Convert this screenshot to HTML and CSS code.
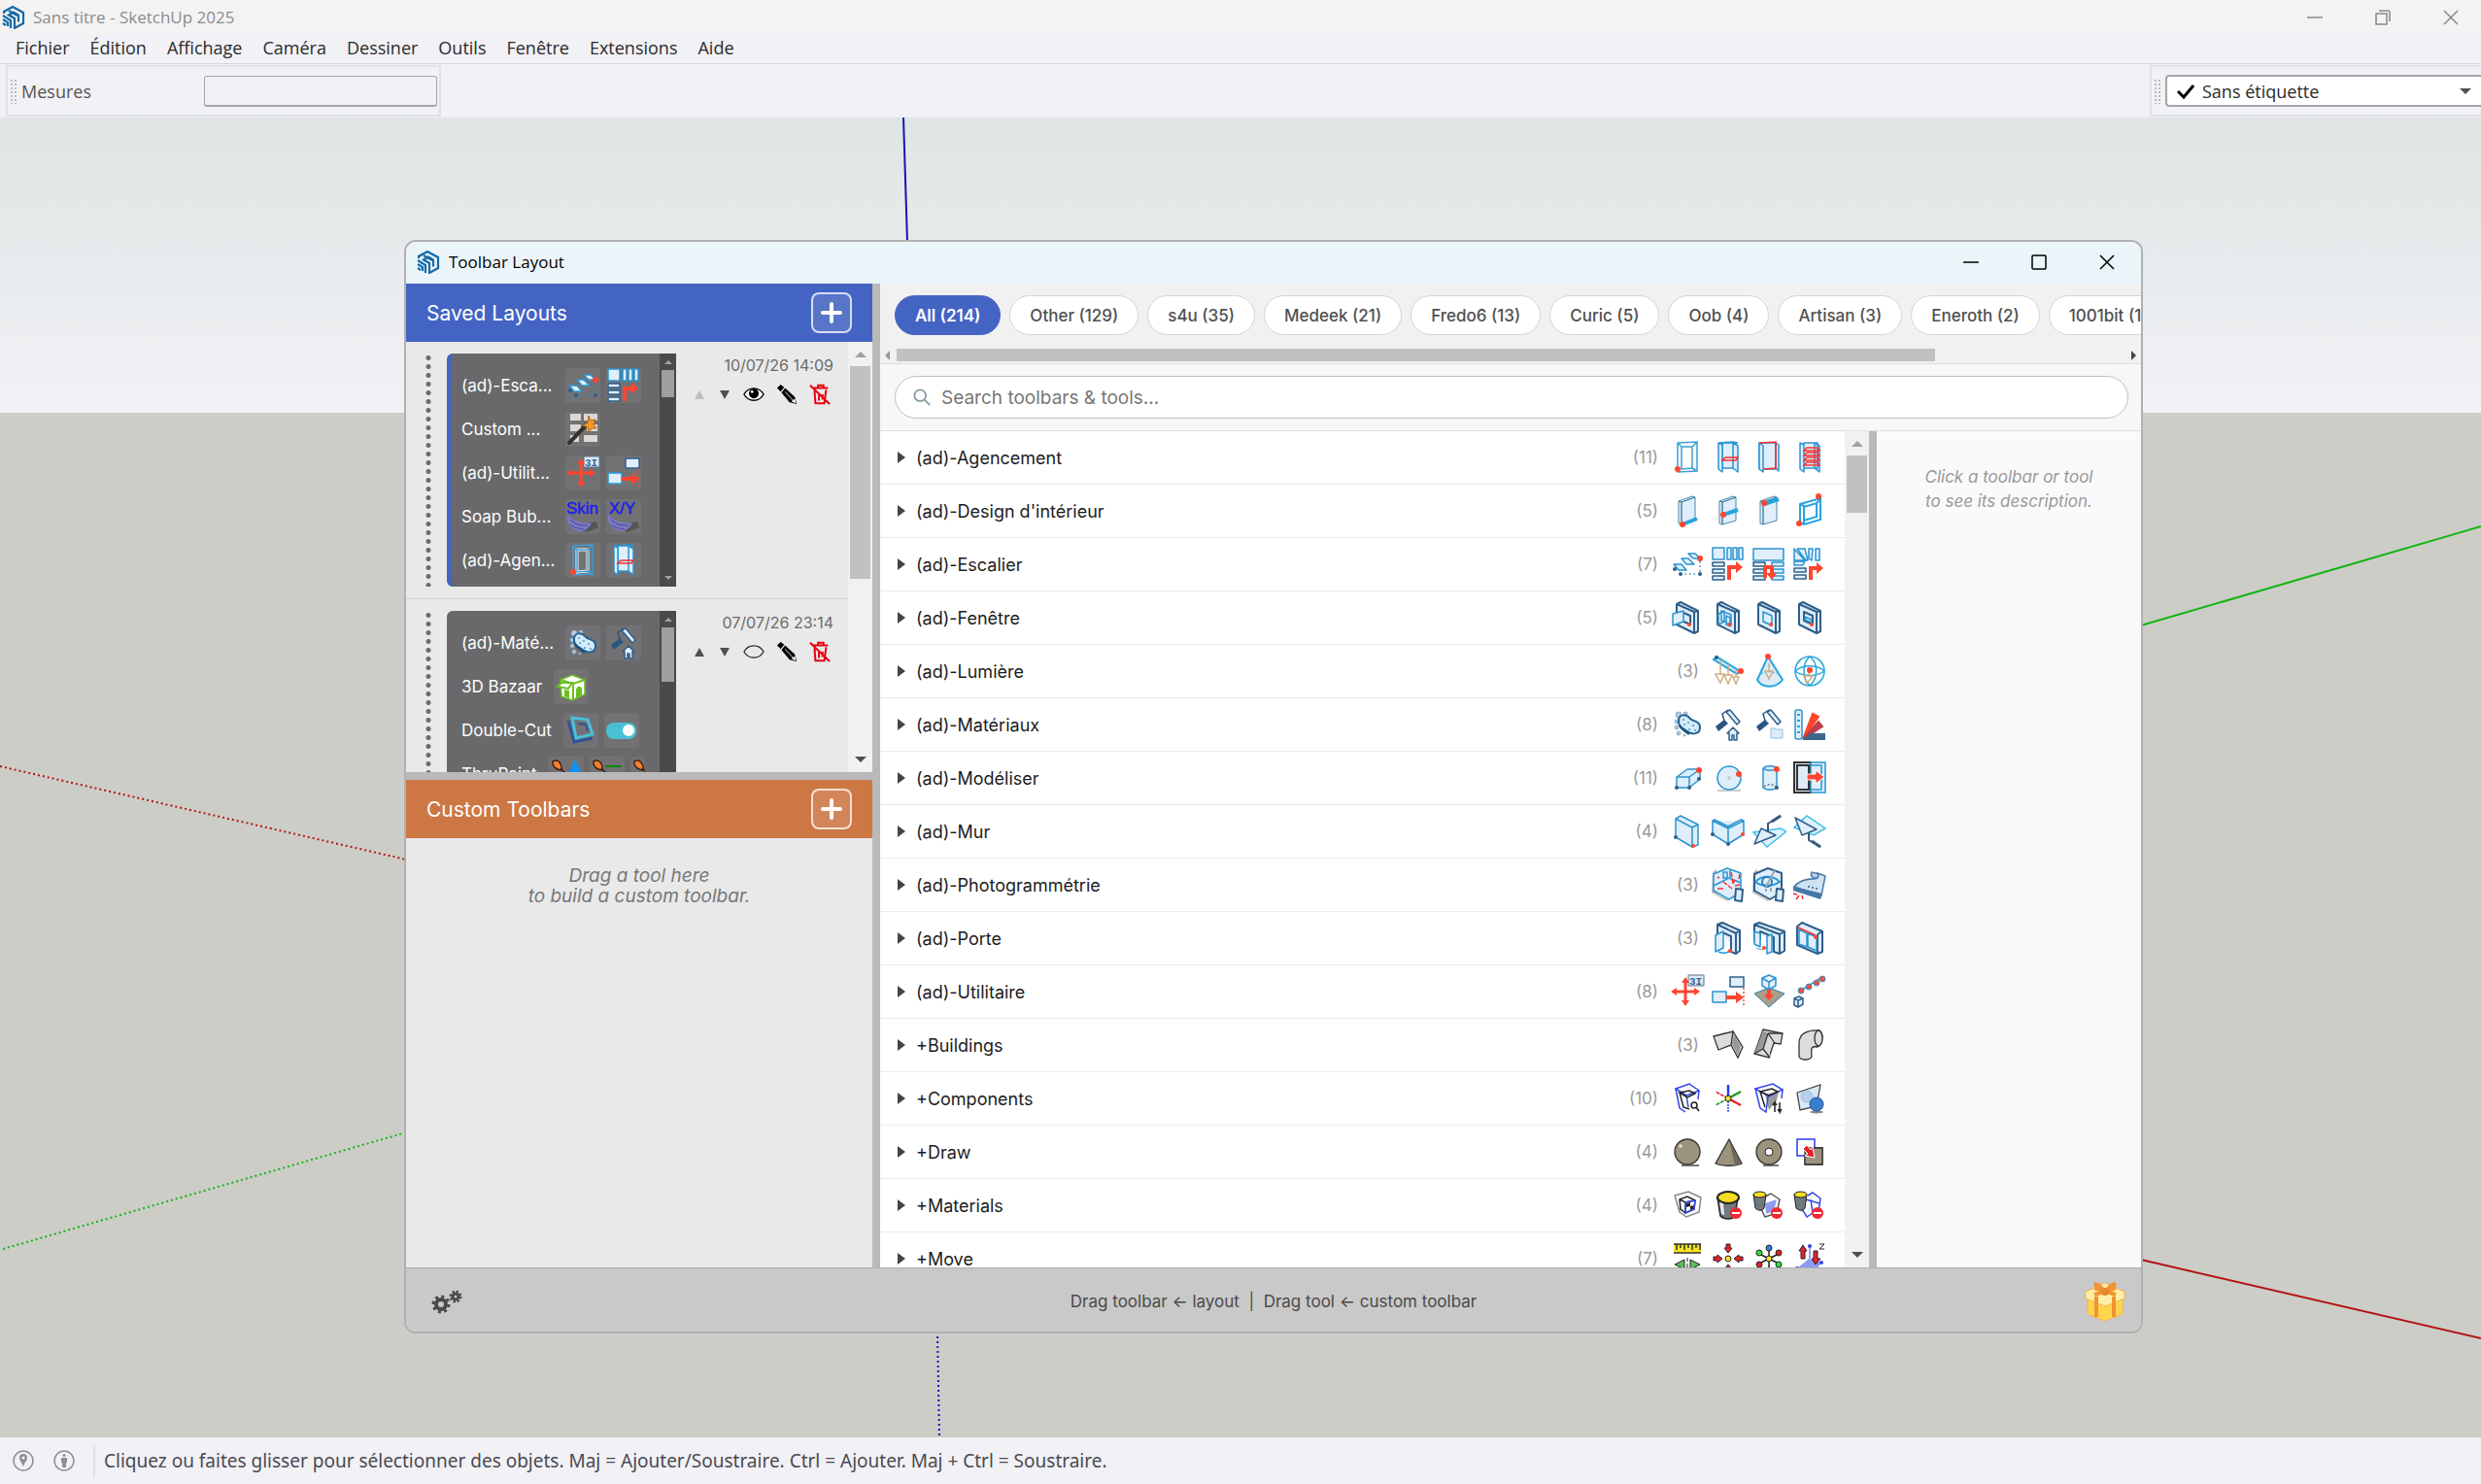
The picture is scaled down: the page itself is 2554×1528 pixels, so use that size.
FILE: index.html
```html
<!DOCTYPE html>
<html lang="fr">
<head>
<meta charset="utf-8">
<title>Sans titre - SketchUp 2025</title>
<link rel="stylesheet" href="styles.css">
</head>
<body>
<svg class="defs" aria-hidden="true">
  <symbol id="logo" viewBox="0 0 24 24"><g fill="none" stroke="#1469a8" stroke-width="2.2"><path d="M2 8V6l9-5 11 6v11l-9 5V13L7 9.500l5-3 5 3v7"/><path d="M1 10l8 5v8M1 14l5 3v4M1 18l3 2M7 5l9 5"/></g></symbol>
  <symbol id="plus" viewBox="0 0 24 24"><path d="M12 3v18M3 12h18" stroke="#fff" stroke-width="4" stroke-linecap="round"/></symbol>
  <symbol id="frame" viewBox="0 0 36 36"><path class="bo" d="M8 3l20-1v30l-20 1zM12 7h11v22l-11 1zM8 3l4 4M28 2l-5 5M28 32l-5-3"/><circle class="r" cx="8" cy="30" r="3"/></symbol>
  <symbol id="shelf" viewBox="0 0 36 36"><path class="b" d="M12 3h14v26H12z"/><path class="b" d="M8 3l4 2v28l-4-3zM23 3l5 3v27l-5-4zM8 3l15-1 5 1"/><path class="rs" d="M12 21l3-3 13 0-2 3z"/></symbol>
  <symbol id="stair" viewBox="0 0 36 36"><path class="b" d="M4 18h8l5 6H9zM12 12h7l6 6h-8zM19 7h7l5 5h-7z"/><path d="M11 28h20V14" fill="none" stroke="#2f88bd" stroke-width="1.500" stroke-dasharray="1.500 3"/><circle class="nf" cx="5" cy="23" r="2"/><circle class="nf" cx="11" cy="28" r="2"/><circle class="nf" cx="31" cy="28" r="2"/><circle class="r" cx="31" cy="12" r="3"/></symbol>
  <symbol id="stairturn" viewBox="0 0 36 36"><path class="b" d="M2 1h12v12H2zM17 1h4v12h-4zM23 1h4v12h-4zM29 1h4v12h-4z"/><path class="n" d="M2 16h12v4H2zM2 23h12v4H2zM2 30h12v4H2z"/><path class="r" d="M17 34V19h9v-4l7 6-7 6v-4h-5v11z"/></symbol>
  <symbol id="moves" viewBox="0 0 36 36"><path d="M19 1h16v11H19z" fill="#dcebf7" stroke="#58718c"/><text x="20" y="11" class="tag">3I</text><path class="r" d="M16 3l4 6h-2.500v7.500H25V14l6 4-6 4v-2.500h-7.500V27H20l-4 6-4-6h2.500v-7.500H7V22l-6-4 6-4v2.500h7.500V9H12z"/></symbol>
  <symbol id="dist" viewBox="0 0 36 36"><path class="n" stroke-width="2" d="M20 3h14v10H20z"/><path class="b" stroke-width="2" d="M2 18h14v11H2z"/><path class="r" d="M16 22h10v-4l8 6-8 6v-4H16z"/><path d="M34 14v18" stroke="#f43" stroke-width="1.500" stroke-dasharray="2 2"/></symbol>
  <symbol id="sponge" viewBox="0 0 36 36"><g fill="#b5cce0" stroke="#8fa9c2"><circle cx="9" cy="8" r="3"/><circle cx="16" cy="7" r="2"/><circle cx="7" cy="15" r="2"/><circle cx="7" cy="21" r="2"/><circle cx="9" cy="27" r="2"/><circle cx="15" cy="29" r="1"/></g><path d="M9 13c1-6 8-6 12-1 3 3 10 2 10 9 0 7-8 8-13 4-5-3-10-6-9-12z" fill="#d6eaf8" stroke="#1f6396" stroke-width="2"/><path d="M10 19c2 5 6 6 10 9" fill="none" stroke="#1f4c74" stroke-width="2"/><g fill="#3aa0dc"><circle cx="14" cy="13" r="1"/><circle cx="19" cy="16" r="1"/><circle cx="15" cy="18" r="1"/><circle cx="24" cy="19" r="1"/><circle cx="26" cy="24" r="1"/><circle cx="20" cy="23" r="1"/></g></symbol>
  <symbol id="roller" viewBox="0 0 36 36"><path d="M5 20l9-7 4 4-10 8z" fill="#2b5680"/><path d="M14 14l-2-7 6-4M18 3l10 13" fill="none" stroke="#2b5680" stroke-width="1.500"/><path class="n" d="M16 5l4-2 10 12-3 3z"/></symbol>
  <symbol id="house" viewBox="0 0 36 36"><path class="n" d="M17 27l6-6 6 6h-2v7h-3v-5h-2v5h-3v-7z"/></symbol>
  <symbol id="eye" viewBox="0 0 24 24"><path d="M1 12c5-9 17-9 22 0-5 9-17 9-22 0z" fill="#fff" stroke="#000" stroke-width="1.500"/><circle cx="12" cy="11" r="5.500"/><circle cx="10" cy="9" r="1.500" fill="#fff"/></symbol>
  <symbol id="eyeoff" viewBox="0 0 24 24"><path d="M1 12c5-9 17-9 22 0-5 9-17 9-22 0z" fill="none" stroke="#222" stroke-width="1.300"/></symbol>
  <symbol id="pencil" viewBox="0 0 24 24"><path d="M1 5l4-4 4 3-4 5zM6 10l4-5 11 10 2 8-8-2z"/><path d="M10 9l9 10" stroke="#e9e9e9" stroke-width="1"/><path d="M17 20l4-3 1 5z" fill="#fff"/></symbol>
  <symbol id="trash" viewBox="0 0 24 24"><g fill="none" stroke="#e60012" stroke-width="2.200"><path d="M4 5h17M10 4V2h6v3M6 8l1 14h10l2-15M11 12v7M15 12v6M1 2l22 21"/></g></symbol>
  <symbol id="bucket" viewBox="0 0 36 36"><path d="M2 5l2 14c3 3 7 3 9 0l2-14z" fill="#707880" stroke="#222"/><ellipse cx="8.500" cy="5" rx="6.500" ry="3" fill="#f3dc22" stroke="#222"/></symbol>
  <symbol id="no" viewBox="0 0 36 36"><circle cx="26" cy="26" r="6" fill="#f22832"/><path d="M22 26h8" stroke="#fff" stroke-width="2"/></symbol>
  <symbol id="up" viewBox="0 0 12 8"><path d="M0 7l6-6 6 6z"/></symbol>
  <symbol id="down" viewBox="0 0 12 8"><path d="M0 1h12l-6 6z"/></symbol>
  <symbol id="tallup" viewBox="0 0 10 9"><path d="M0 9l5-9 5 9z"/></symbol>
  <symbol id="talldown" viewBox="0 0 10 9"><path d="M0 0h10L5 9z"/></symbol>
  <symbol id="thru" viewBox="0 0 36 36"><path d="M4 5c5-3 10 2 9 9-5 0-10-4-9-9zM12 12l6 6" fill="#f08030" stroke="#40210f" stroke-width="1.500"/></symbol>
</svg>

<header class="titlebar">
  <svg class="logo"><use href="#logo"/></svg>
  <span>Sans titre - SketchUp 2025</span>
  <div class="winbtns main-btns">
    <button aria-label="Réduire"><svg viewBox="0 0 16 16"><path d="M0 8h16"/></svg></button>
    <button aria-label="Restaurer"><svg viewBox="0 0 16 16"><path d="M1 4h11v11H1zM4 1h9q2 0 2 2v9"/></svg></button>
    <button aria-label="Fermer"><svg viewBox="0 0 16 16"><path d="M1 1l14 14M15 1L1 15"/></svg></button>
  </div>
</header>
<nav class="menu">
  <a href="#">Fichier</a><a href="#">Édition</a><a href="#">Affichage</a><a href="#">Caméra</a><a href="#">Dessiner</a><a href="#">Outils</a><a href="#">Fenêtre</a><a href="#">Extensions</a><a href="#">Aide</a>
</nav>
<div class="toolbars">
  <div class="tb measures"><i class="grip"></i><label for="mes">Mesures</label><input id="mes" type="text"></div>
  <div class="tb tags"><i class="grip"></i>
    <div class="combo"><svg viewBox="0 0 18 16"><path d="M1 8l6 6L17 2" fill="none" stroke="#000" stroke-width="3"/></svg><select aria-label="Étiquette"><option>Sans étiquette</option></select><svg class="tri"><use href="#down"/></svg></div>
  </div>
</div>

<main class="scene">
  <svg class="axes" viewBox="0 0 2554 1359" preserveAspectRatio="none" fill="none" stroke-width="2">
    <path d="M930 0l4 128" stroke="#1414b4"/>
    <path d="M965 1250l2 109" stroke="#1414b4" stroke-dasharray="2 3"/>
    <path d="M2204 523l350-102" stroke="#14b414"/>
    <path d="M3 1165l415-120" stroke="#14b414" stroke-dasharray="2 3"/>
    <path d="M0 668l418 96" stroke="#b41414" stroke-dasharray="2 3"/>
    <path d="M2204 1176l350 81" stroke="#b41414"/>
  </svg>

  <section class="dialog" aria-label="Toolbar Layout">
    <header class="dlg-title">
      <svg class="logo"><use href="#logo"/></svg>
      <span>Toolbar Layout</span>
      <div class="winbtns">
        <button aria-label="Minimize"><svg viewBox="0 0 16 16"><path d="M0 8h16"/></svg></button>
        <button aria-label="Maximize"><svg viewBox="0 0 16 16"><rect x="1" y="1" width="14" height="14" rx="1"/></svg></button>
        <button aria-label="Close"><svg viewBox="0 0 16 16"><path d="M1 1l14 14M15 1L1 15"/></svg></button>
      </div>
    </header>
    <div class="dlg-body">
      <aside class="left">
        <div class="head blue"><h2>Saved Layouts</h2><button class="add" aria-label="Add layout"><svg><use href="#plus"/></svg></button></div>
        <div class="saved">
          <div class="layouts">
            <article class="layout">
              <i class="dots"></i>
              <div class="card active">
                <div class="card-rows">
                  <div class="crow"><span class="cut">(ad)-Esca...</span><svg class="tool"><use href="#stair"/></svg><svg class="tool"><use href="#stairturn"/></svg></div>
                  <div class="crow"><span class="cut">Custom ...</span><svg class="tool" viewBox="0 0 36 36"><path d="M5 2h11v7H5zM19 2h14v7H19zM5 13h11v7H5zM22 13h11v7H22zM5 24h9v7H5zM19 24h14v7H19z" fill="#ddd8d5"/><path d="M4 32L22 13" stroke="#35332c" stroke-width="4" stroke-linecap="round"/><path d="M24 4l2 5 5-1-2 5 3 4-5 0-3 4-1-5-5-2 5-3z" fill="#f09a2a" stroke="#a86414"/></svg></div>
                  <div class="crow"><span class="cut">(ad)-Utilit...</span><svg class="tool"><use href="#moves"/></svg><svg class="tool"><use href="#dist"/></svg></div>
                  <div class="crow"><span class="cut">Soap Bub...</span><svg class="tool" viewBox="0 0 36 36"><path d="M10 28l22-5 2 6-12 5z" fill="#555"/><path d="M2 15c5 8 14 9 25 10-3 5-8 9-13 8-6-1-14-8-12-18z" fill="#7a78c4"/><path d="M5 21c6 6 12 6 18 6M5 26c5 4 9 4 14 5" stroke="#4a488e" fill="none"/><text x="1" y="15" class="soap">Skin</text></svg><svg class="tool" viewBox="0 0 36 36"><path d="M10 28l22-5 2 6-12 5z" fill="#555"/><path d="M2 15c5 8 14 9 25 10-3 5-8 9-13 8-6-1-14-8-12-18z" fill="#7a78c4"/><path d="M5 21c6 6 12 6 18 6M5 26c5 4 9 4 14 5" stroke="#4a488e" fill="none"/><text x="3" y="15" class="soap">X/Y</text></svg></div>
                  <div class="crow"><span class="cut">(ad)-Agen...</span><svg class="tool" viewBox="0 0 36 36"><path d="M12 7h11v22l-11 1z" fill="none" stroke="#fff" stroke-width="3"/><use href="#frame"/></svg><svg class="tool"><use href="#shelf"/></svg></div>
                </div>
                <div class="bar dark"><svg class="tri"><use href="#up"/></svg><i class="thumb t1"></i><svg class="tri"><use href="#down"/></svg></div>
              </div>
              <div class="meta"><time>10/07/26 14:09</time>
                <div class="acts"><button class="arr" disabled aria-label="Up"><svg><use href="#tallup"/></svg></button><button class="arr" aria-label="Down"><svg><use href="#talldown"/></svg></button><button aria-label="Hide"><svg><use href="#eye"/></svg></button><button aria-label="Rename"><svg><use href="#pencil"/></svg></button><button aria-label="Delete"><svg><use href="#trash"/></svg></button></div>
              </div>
            </article>
            <article class="layout">
              <i class="dots"></i>
              <div class="card">
                <div class="card-rows">
                  <div class="crow"><span class="cut">(ad)-Maté...</span><svg class="tool"><use href="#sponge"/></svg><svg class="tool" viewBox="0 0 36 36"><use href="#roller"/><use href="#house"/></svg></div>
                  <div class="crow"><span>3D Bazaar</span><svg class="tool" viewBox="0 0 36 36"><path d="M7 11L19 6l13 5v15l-13 6-11-4z" fill="#fff" stroke="#6abf1f" stroke-width="1.500"/><path d="M7 11l13 4 12-4M20 15v16" stroke="#6abf1f" stroke-width="2" fill="none"/><path d="M11 21l5 1v8l-5-2zM23 30V21c1-4 5-4 6-1v7z" fill="#6abf1f"/><path d="M4 18l4-4h11l-4 6z" fill="#fff" stroke="#6abf1f" stroke-width="2"/></svg></div>
                  <div class="crow"><span>Double-Cut</span><svg class="tool" viewBox="0 0 36 36"><path d="M5 8l6 22 19-4" fill="none" stroke="#31529a" stroke-width="3"/><path d="M9 5l16 2 5 15-17 4z" fill="none" stroke="#48c0d8" stroke-width="3"/><path d="M15 11l8 1 2 7" fill="none" stroke="#31529a" stroke-width="2"/></svg><svg class="tool" viewBox="0 0 36 36"><rect x="2" y="10" width="31" height="17" rx="8" fill="#4bc0d4"/><circle cx="25" cy="18" r="6" fill="#fff"/></svg></div>
                  <div class="crow"><span>ThruPaint</span><svg class="tool" viewBox="0 0 36 36"><use href="#thru"/><path d="M27 3l9 20H18z" fill="#0a94ff"/></svg><svg class="tool" viewBox="0 0 36 36"><use href="#thru"/><path d="M16 10h17" stroke="#0f8a0f" stroke-width="2"/></svg><svg class="tool" viewBox="0 0 36 36"><use href="#thru"/></svg></div>
                </div>
                <div class="bar dark"><svg class="tri"><use href="#up"/></svg><i class="thumb t2"></i><svg class="tri"><use href="#down"/></svg></div>
              </div>
              <div class="meta"><time>07/07/26 23:14</time>
                <div class="acts"><button class="arr" aria-label="Up"><svg><use href="#tallup"/></svg></button><button class="arr" aria-label="Down"><svg><use href="#talldown"/></svg></button><button aria-label="Show"><svg><use href="#eyeoff"/></svg></button><button aria-label="Rename"><svg><use href="#pencil"/></svg></button><button aria-label="Delete"><svg><use href="#trash"/></svg></button></div>
              </div>
            </article>
          </div>
          <div class="bar"><svg class="tri off"><use href="#up"/></svg><i class="thumb t3"></i><svg class="tri"><use href="#down"/></svg></div>
        </div>
        <div class="hsplit"></div>
        <div class="head orange"><h2>Custom Toolbars</h2><button class="add" aria-label="Add toolbar"><svg><use href="#plus"/></svg></button></div>
        <p class="drop">Drag a tool here<br>to build a custom toolbar.</p>
      </aside>
      <div class="vsplit"></div>
      <div class="right">
        <div class="pills"><button class="on">All (214)</button><button>Other (129)</button><button>s4u (35)</button><button>Medeek (21)</button><button>Fredo6 (13)</button><button>Curic (5)</button><button>Oob (4)</button><button>Artisan (3)</button><button>Eneroth (2)</button><button>1001bit (1)</button></div>
        <div class="hbar"><svg viewBox="0 0 5 10"><path d="M5 0v10L0 5z" fill="#999"/></svg><i></i><svg viewBox="0 0 5 10"><path d="M0 0v10l5-5z" fill="#444"/></svg></div>
        <div class="searchwrap"><label class="search"><svg viewBox="0 0 20 20"><circle cx="8" cy="8" r="6.500"/><path d="M13 13l6 6"/></svg><input type="search" placeholder="Search toolbars &amp; tools..." aria-label="Search"></label></div>
        <div class="columns">
          <ul class="list">
            <li><button>(ad)-Agencement</button><em>(11)</em>
              <svg><use href="#frame"/></svg><svg><use href="#shelf"/></svg>
              <svg viewBox="0 0 36 36"><path class="b" d="M8 3h17v27H8z"/><path class="b" d="M8 3l4 3v27l-4-3zM25 3l3 2v27l-3-3z"/><path class="rs" d="M9 3l16-1v27l-12 1"/></svg>
              <svg viewBox="0 0 36 36"><path class="b" d="M8 3l4 2v28l-4-3zM12 3h14v26H12zM23 3l5 3v27l-5-4z"/><path class="rs" d="M12 11l3-3h11l2 3zM12 16l3-3h11l2 3zM12 21l3-3h11l2 3zM12 26l3-3h11l2 3z"/></svg></li>
            <li><button>(ad)-Design d'intérieur</button><em>(5)</em>
              <svg viewBox="0 0 36 36"><path class="s" d="M12 9l14-5v24l-14 4zM9 8l14-5 3 1-14 5zM9 8l3 1v23l-3-1z"/><path d="M13 32l15-6" class="thick"/><circle class="r" cx="13" cy="32" r="3"/></svg>
              <svg viewBox="0 0 36 36"><path class="s" d="M12 9l14-5v24l-14 4zM9 8l14-5 3 1-14 5zM9 8l3 1v23l-3-1z"/><path d="M13 22l15-5" class="thick"/><circle class="r" cx="13" cy="22" r="3"/></svg>
              <svg viewBox="0 0 36 36"><path class="s" d="M12 9l14-5v24l-14 4zM9 8l14-5 3 1-14 5zM9 8l3 1v23l-3-1z"/><path d="M13 11l15-5" class="thick"/><circle class="r" cx="13" cy="10" r="3"/></svg>
              <svg viewBox="0 0 36 36"><path d="M8 11l21-6v22l-17 5-4-2zM12 14l13-4v14l-13 4zM8 11l4 2v18M29 6l-4 4" fill="none" stroke="#25a5de" stroke-width="2"/><circle class="r" cx="27" cy="3" r="3"/><circle class="r" cx="7" cy="31" r="3"/></svg></li>
            <li><button>(ad)-Escalier</button><em>(7)</em>
              <svg><use href="#stair"/></svg><svg><use href="#stairturn"/></svg>
              <svg viewBox="0 0 36 36"><path class="b" d="M2 2h31v12H2zM21 16h12v4H21zM21 23h12v4H21zM21 30h12v4H21z"/><path class="n" d="M2 16h12v4H2zM2 23h12v4H2zM2 30h12v4H2z"/><path class="r" d="M12 32V19h11v8h3l-5 7-6-7h4v-4h-3v9z"/></svg>
              <svg viewBox="0 0 36 36"><path class="b" d="M2 2l11 12H2zM5 2h8l3 12h-2zM17 2h4l-1 12-3-2zM24 2h4v12h-4zM2 15h11l-2 4H2z"/><path class="n" d="M2 22h12v4H2zM2 29h12v4H2z"/><path class="r" d="M17 34V20h8v-4l7 6-7 6v-4h-4v10z"/></svg></li>
            <li><button>(ad)-Fenêtre</button><em>(5)</em>
              <svg viewBox="0 0 36 36"><path class="n w" d="M7 4l18 8v22L7 25zM7 4l4-2 18 9v21l-4 2M25 12l4-1M12 12l9 4v9l-9-4z"/><path class="b" d="M3 14l11-3v11L3 26z"/><circle class="r" cx="20" cy="25" r="2"/></svg>
              <svg viewBox="0 0 36 36"><path class="n w" d="M7 4l18 8v22L7 25zM7 4l4-2 18 9v21l-4 2M25 12l4-1"/><path class="b" d="M11 11l10 4v10l-10-4zM8 14l6-3v11l-6 3zM16 16l4 2v9l-4-2z"/><circle class="r" cx="20" cy="25" r="2"/></svg>
              <svg viewBox="0 0 36 36"><path class="n w" d="M7 4l18 8v22L7 25zM7 4l4-2 18 9v21l-4 2M25 12l4-1"/><path class="b" d="M12 12l9 4v10l-9-4z"/><circle class="r" cx="20" cy="25" r="2"/></svg>
              <svg viewBox="0 0 36 36"><path class="n w" d="M7 4l18 8v22L7 25zM7 4l4-2 18 9v21l-4 2M25 12l4-1M12 12l9 4v9l-9-4z"/><path class="b" d="M13 17l7 3v3l-7-3z"/><circle class="r" cx="20" cy="25" r="2"/></svg></li>
            <li><button>(ad)-Lumière</button><em>(3)</em>
              <svg viewBox="0 0 36 36"><path d="M3 6l3-3 24 15-3 3z" fill="#cce8f8" stroke="#25a5de" stroke-width="2"/><path class="tan" d="M10 7v14M18 11v12M26 17v7M5 21h9l-4 9zM14 22h8l-4 9zM23 24h6l-3 7z"/><circle class="nf" cx="6" cy="4" r="2"/><circle class="r" cx="31" cy="18" r="3"/></svg>
              <svg viewBox="0 0 36 36"><path d="M17 3l15 24c-7 9-21 9-26 0z" fill="#dcebf7" stroke="#25a5de" stroke-width="2"/><path d="M10 21c4-3 11-3 16 0" fill="none" stroke="#25a5de" stroke-dasharray="2 2"/><path class="tan" d="M18 10v8M14 18h8l-4 8z"/><circle class="r" cx="17" cy="3" r="3"/></svg>
              <svg viewBox="0 0 36 36"><g fill="none" stroke="#25a5de" stroke-width="1.500"><circle cx="18" cy="18" r="15"/><path d="M18 3c-8 7-8 22 0 30M18 3c9 7 9 22 0 30M3 18c8-7 22-7 30 0M3 18c8 6 22 6 30 0"/></g><path class="tan" d="M18 18l-2 5M12 23h9l-6 8z"/><circle class="r" cx="18" cy="17" r="3"/></svg></li>
            <li><button>(ad)-Matériaux</button><em>(8)</em>
              <svg><use href="#sponge"/></svg><svg viewBox="0 0 36 36"><use href="#roller"/><use href="#house"/></svg>
              <svg viewBox="0 0 36 36"><use href="#roller"/><path d="M20 22h4l1 1h7v9H20z" fill="#dcebf7" stroke="#8fc4ec"/></svg>
              <svg viewBox="0 0 36 36"><path d="M11 33l10-26 6 3z" fill="#ff452b" stroke="#ff452b" stroke-width="2"/><path d="M11 33l16-18 4 5z" fill="#bc3f48" stroke="#bc3f48" stroke-width="2"/><path d="M11 33l8-6h15v7H11z" fill="#3c668c"/><rect class="b" x="3" y="3" width="7" height="30" rx="2"/><path d="M5 8h3M5 14h3M5 20h3M5 26h3" stroke="#25a5de" stroke-width="2"/></svg></li>
            <li><button>(ad)-Modéliser</button><em>(11)</em>
              <svg viewBox="0 0 36 36"><path class="b" d="M7 17l11-8h13l-11 8zM7 17h13v11H7zM20 17l11-8v10l-11 9z"/><circle class="nf" cx="7" cy="28" r="2"/><circle class="nf" cx="20" cy="28" r="2"/><circle class="nf" cx="30" cy="19" r="2"/><circle class="r" cx="30" cy="10" r="3"/></svg>
              <svg viewBox="0 0 36 36"><path d="M7 31h24" stroke="#bbb" stroke-width="1.500"/><circle class="b" cx="19" cy="18" r="12"/><circle cx="19" cy="18" r="2" fill="#c7ccd2"/><circle class="r" cx="29" cy="14" r="3"/></svg>
              <svg viewBox="0 0 36 36"><path class="b" d="M12 8v20c3 3 11 3 14 0V8c-3-3-11-3-14 0zM12 8c3 3 11 3 14 0"/><path d="M13 27c4-3 9-3 12 0" fill="none" stroke="#234" stroke-dasharray="2 2"/><circle class="nf" cx="26" cy="28" r="2"/><circle class="r" cx="26" cy="9" r="3"/></svg>
              <svg viewBox="0 0 36 36"><path d="M2 2h17v31H2zM5 5h12v25H5z" fill="#dcebf7" stroke="#333" stroke-width="2"/><path class="b" d="M19 2h15v31H19zM19 5h11v25H19z"/><path class="r" stroke="#fff" d="M15 14h9v-4l9 7-9 7v-4h-9z"/></svg></li>
            <li><button>(ad)-Mur</button><em>(4)</em>
              <svg viewBox="0 0 36 36"><path class="b" d="M6 5l17 9v20L6 24zM6 5l5-3 18 9-6 3M23 14l6-3v21l-6 2"/><circle class="nf" cx="6" cy="24" r="2"/><circle class="r" cx="24" cy="33" r="2"/></svg>
              <svg viewBox="0 0 36 36"><path class="b" d="M2 7l16 8v16L2 21zM18 15l16-8v14l-16 10zM2 7l2-1 14 7 13-7 3 1"/><circle class="nf" cx="2" cy="21" r="2"/><circle class="nf" cx="18" cy="31" r="2"/><circle class="r" cx="33" cy="21" r="2"/></svg>
              <svg viewBox="0 0 36 36"><path d="M2 19l28-4 6 3-20 16z" fill="#dff3fb" stroke="#3cbfe8" stroke-width="1.500"/><path class="n" d="M10 15l15 7-22 9z"/><path d="M17 19v-9l13-8" fill="none" stroke="#355a7d" stroke-width="2"/><path d="M21 8l9-6" stroke="#355a7d" stroke-width="3"/></svg>
              <svg viewBox="0 0 36 36"><path d="M2 14l13-12 19 13-12 7z" fill="#dff3fb" stroke="#3cbfe8" stroke-width="1.500"/><path class="n" d="M3 4l22 12-15 6z"/><path d="M17 20v7l12 7" fill="none" stroke="#355a7d" stroke-width="2"/><path d="M20 28l9 6" stroke="#355a7d" stroke-width="3"/></svg></li>
            <li><button>(ad)-Photogrammétrie</button><em>(3)</em>
              <svg viewBox="0 0 36 36"><path d="M2 5l4-3v25l12 7-1 1L1 26z" fill="#bbb"/><path class="b" d="M3 7l14-6 14 5v20l-12 7L3 24zM3 19l16-8 12 5M20 2v9"/><path class="b" d="M13 5h4v6h-4z"/><path class="rs" d="M7 10l2 1M13 15l4 3M7 22h6M21 5l1 5M30 7l-1 5M25 13l-2 4M30 18l-5 1M18 19l4 3M22 12l1 4"/><path class="n w" d="M26 22l7 1-1 12-7-1z"/></svg>
              <svg viewBox="0 0 36 36"><path d="M2 5l4-3v25l12 7-1 1L1 26z" fill="#bbb"/><path class="n w" d="M3 7l14-6 14 5v20l-12 7L3 24z"/><path class="b w" d="M4 15c6-7 19-7 25 0-7 5-19 5-25 0z"/><circle cx="16" cy="15" r="5" fill="none" stroke="#287fb8" stroke-width="2"/><path d="M15 20l9-17M15 22v3M20 21v4" stroke="#9ba9b5" stroke-width="2"/><path class="n w" d="M26 22l7 1-1 12-7-1z"/></svg>
              <svg viewBox="0 0 36 36"><path d="M2 20c5-6 12-8 20-8h3l3-5-8-2c-2 4 1 6 4 6" fill="#b9d3ea" stroke="#4a7ba8" stroke-width="1.500"/><path d="M2 20c5-6 12-8 20-8 5 0 6-3 4-6l8 3-4 20z" fill="#cfe2f3" stroke="#4a7ba8" stroke-width="1.500"/><path d="M1 20l30 7-2 6L1 24z" fill="#4677a8"/><g fill="#2f5f8a"><circle cx="17" cy="20" r="1"/><circle cx="21" cy="21" r="1"/><circle cx="25" cy="22" r="1"/></g><path class="rs" d="M1 27l4 1M4 33l3-4M10 29l1 4"/></svg></li>
            <li><button>(ad)-Porte</button><em>(3)</em>
              <svg viewBox="0 0 36 36"><path class="n w" d="M7 4l5-2 18 8v21l-4 3-5-2V16l-9-4-5 5zM7 4l19 9v20M26 13l4-3"/><path class="b" d="M5 15l8-4v17l-8 4z"/><path d="M8 32c4 2 9 1 13-1" fill="none" stroke="#25a5de" stroke-width="1.500"/><circle class="r" cx="20" cy="31" r="2"/></svg>
              <svg viewBox="0 0 36 36"><path class="n w" d="M3 4l5-2 26 9v20l-5 3-6-2V17L9 11v8l-6 2zM3 4l26 10v20M29 14l5-3"/><path class="b" d="M3 11l6 2v14l-6-3zM16 16l5-2v18l-5 2z"/><path d="M5 28c3 2 6 2 9 0" fill="none" stroke="#25a5de"/><circle class="r" cx="13" cy="28" r="2"/></svg>
              <svg viewBox="0 0 36 36"><path class="n w" d="M5 6l5-4 21 9v21l-5 2-21-9zM26 14l5-3M26 14v20"/><path class="b" d="M7 9l8 4v14l-8-3zM16 13l9 4v14l-9-4z"/><path class="rs w" d="M6 7l18 8"/><circle class="r" cx="24" cy="17" r="2"/></svg></li>
            <li><button>(ad)-Utilitaire</button><em>(8)</em>
              <svg><use href="#moves"/></svg><svg><use href="#dist"/></svg>
              <svg viewBox="0 0 36 36"><path d="M3 20l15-6 16 6-16 14z" fill="#a89f8b" stroke="#357eac"/><path class="b" d="M11 4l7-3 7 3v8l-7 4-7-4zM11 4l7 4 7-4M18 8v8"/><path class="r" d="M16 16h4v5h3l-5 6-5-6h3z"/></svg>
              <svg viewBox="0 0 36 36"><path d="M7 18L31 3" stroke="#44a6d4" stroke-width="2"/><g fill="#f0503c" stroke="#3a8ebf"><circle cx="9" cy="17" r="3"/><circle cx="17" cy="13" r="3"/><circle cx="25" cy="9" r="3"/><circle cx="31" cy="5" r="3"/></g><path class="n" d="M2 25l5-2 4 2v6l-5 3-4-2zM2 25l4 2 5-2M6 27v6"/></svg></li>
            <li><button>+Buildings</button><em>(3)</em>
              <svg viewBox="0 0 36 36"><path class="g" d="M3 9l20-5-2 14-13 5zM23 4l10 16-5 11-7-13z"/><path d="M24 7l7 12-3 10-6-12z" fill="#999"/></svg>
              <svg viewBox="0 0 36 36"><path class="g" d="M12 2l20 4-2 11-7-1-5 15-15-4z"/><path d="M12 3l5 3-6 16-8 5z" fill="#999"/><path class="g" d="M17 6l15 0M17 6l-5 16 7 9M12 22l-9 5M17 6l7 10"/></svg>
              <svg viewBox="0 0 36 36"><path class="g" d="M7 30V16C7 6 16 2 28 3c5 4 3 15-2 17-6-1-7 0-6 10-2 4-11 4-13 0z"/><ellipse class="g" cx="27" cy="11" rx="4" ry="8"/></svg></li>
            <li><button>+Components</button><em>(10)</em>
              <svg viewBox="0 0 36 36"><g fill="none" stroke-width="1.500"><path d="M6 8l14-5 10 7-13 5zM6 8l4 20 6 4M17 15l2 12M30 10l-1 9" stroke="#3545e8"/><path d="M10 12l10-2 6 3-8 4zM10 12l4 15 6 2" stroke="#222"/><circle cx="25" cy="25" r="3" stroke="#222"/><path d="M27 27l3 4" stroke="#222"/></g></svg>
              <svg viewBox="0 0 36 36"><g stroke-width="2.500" fill="none"><path d="M18 18V4" stroke="#2a3cf0"/><path d="M18 18l13-7" stroke="#1d961d"/><path d="M18 18l13 7" stroke="#e8202c"/><path d="M18 18v15" stroke="#2a3cf0" stroke-width="1.500" stroke-dasharray="2 1"/><path d="M18 18L5 11" stroke="#e8202c" stroke-width="1.500" stroke-dasharray="4 1"/><path d="M18 18L5 25" stroke="#1d961d" stroke-width="1.500" stroke-dasharray="4 1"/></g><circle cx="18" cy="18" r="3" fill="#ffe12a" stroke="#222"/></svg>
              <svg viewBox="0 0 36 36"><path d="M14 14l14-3-2 9-8 10z" fill="#999"/><g fill="none" stroke-width="1.500"><path d="M4 8l18-5 10 6-14 7zM4 8l5 20 6 4 2-16M32 9l-1 9" stroke="#3545e8"/><path d="M9 11l12-3 6 3-9 4zM9 11l5 16" stroke="#222"/><path d="M24 32V22l-2 3M24 22l2 3M29 22v10l-2-3M29 32l2-3" stroke="#222"/></g></svg>
              <svg viewBox="0 0 36 36"><path d="M5 12l24-8-4 22-17 4z" fill="#dbe9f7" stroke="#444" stroke-width="1.300"/><circle cx="15" cy="16" r="6" fill="#b7cfec" stroke="#a3bde0"/><ellipse cx="25" cy="32" rx="7" ry="1.500" fill="#888"/><circle cx="25" cy="24" r="7" fill="#3a7ed0" stroke="#21529a"/></svg></li>
            <li><button>+Draw</button><em>(4)</em>
              <svg viewBox="0 0 36 36"><path d="M12 32h18" stroke="#777" stroke-width="2"/><circle class="c" cx="18" cy="18" r="13"/><circle cx="11" cy="12" r="2" fill="#d8d4c6"/></svg>
              <svg viewBox="0 0 36 36"><path class="c" d="M19 5l13 25c-6 3-20 3-27 0z"/><path d="M19 6l12 24-6 2z" fill="#706a58"/></svg>
              <svg viewBox="0 0 36 36"><path d="M12 32h16" stroke="#777" stroke-width="2"/><circle class="c" cx="18" cy="18" r="13"/><circle cx="18" cy="18" r="4" fill="#fff" stroke="#222"/></svg>
              <svg viewBox="0 0 36 36"><path class="c" d="M13 14h18v17H13z"/><path d="M5 5h18v17H5z" fill="#fff" stroke="#2a3cf0" stroke-width="1.500"/><path class="c" d="M13 14h18v17H13z"/><path d="M11 15l4-4 4 5 2-3 2 11-10-2 3-2z" fill="#e8202c" stroke="#fff"/></svg></li>
            <li><button>+Materials</button><em>(4)</em>
              <svg viewBox="0 0 36 36"><path d="M5 8l14-4 13 6-2 15-13 5-7-5z" fill="none" stroke="#888" stroke-width="1.500"/><path d="M10 12l8-3 8 4-1 9-9 4-5-4zM10 12l6 3 10-2M16 15v11" fill="#fff" stroke="#222" stroke-width="1.500"/><path d="M17 16l4-1v4l-4 1zM21 19l4-1-1 4-3 1z" fill="#222"/><path d="M16 15l10-2-1 9-9 4z" fill="none" stroke="#3545e8" stroke-width="1.500"/></svg>
              <svg viewBox="0 0 36 36"><path d="M7 10l3 19c4 4 12 4 15 0l3-19z" fill="#707880" stroke="#222" stroke-width="1.500"/><path d="M9 14l4 1 1 13-3-1z" fill="#e8e8ea"/><ellipse cx="18" cy="10" rx="11" ry="6" fill="#f3dc22" stroke="#222" stroke-width="2"/><use href="#no"/></svg>
              <svg viewBox="0 0 36 36"><path d="M14 9l6-3 9 6-3 14-12 4-4-8" fill="none" stroke="#555" stroke-width="1.500"/><path d="M14 16l12-4-3 12-8 3z" fill="#8f9af0"/><use href="#bucket" y="2"/><use href="#no"/></svg>
              <svg viewBox="0 0 36 36"><path d="M16 8l5-3 8 6-2 14M14 12l14 4M10 22l5 8 6-4-2-14" fill="none" stroke="#3545e8" stroke-width="1.500"/><use href="#bucket" y="2"/><use href="#no"/></svg></li>
            <li><button>+Move</button><em>(7)</em>
              <svg viewBox="0 0 36 36"><path d="M4 3h28v9H4z" fill="#f7e224"/><path d="M4 3h28M7 3v6M11 3v4M15 3v6M19 3v4M23 3v6M27 3v4M31 3v6M4 12h28" stroke="#333" stroke-width="1.500"/><path d="M5 24l10-5v10zM31 24l-10-5v10z" fill="#5cc05a" stroke="#222"/><path d="M18 17v16" stroke="#222" stroke-dasharray="4 2"/></svg>
              <svg viewBox="0 0 36 36"><g fill="#e8202c" stroke="#222"><path d="M16 3h4v4h2l-4 5-4-5h2zM3 16h4v-2l5 4-5 4v-2H3zM33 16h-4v-2l-5 4 5 4v-2h4zM16 33h4v-4h2l-4-5-4 5h2z"/></g><circle cx="18" cy="18" r="3" fill="#ffe12a" stroke="#222"/></svg>
              <svg viewBox="0 0 36 36"><path d="M18 7v22M8 13l20 10M28 13L8 23" stroke="#222" stroke-width="1.500"/><g stroke="#222"><circle cx="18" cy="7" r="3" fill="#2a7ee0"/><circle cx="18" cy="30" r="3" fill="#2a7ee0"/><circle cx="8" cy="12" r="3" fill="#2be03c"/><circle cx="28" cy="24" r="3" fill="#2be03c"/><circle cx="28" cy="12" r="3" fill="#e8202c"/><circle cx="8" cy="24" r="3" fill="#e8202c"/><circle cx="18" cy="18" r="3" fill="#ffe12a"/></g></svg>
              <svg viewBox="0 0 36 36"><path d="M5 28l12-10 13 4-8 12H5z" fill="#8f9af0"/><path d="M18 18V6" stroke="#3545e8"/><g fill="#3545e8"><circle cx="18" cy="5" r="2"/><circle cx="5" cy="28" r="2"/><circle cx="30" cy="22" r="2"/></g><g fill="#e8202c" stroke="#222"><path d="M9 18V10H7l4-6 4 6h-2v8zM22 10h4v8h3l-5 6-4-6h2z"/></g><path d="M28 3h5l-5 5h5" fill="none" stroke="#222"/></svg></li>
          </ul>
          <div class="bar"><svg class="tri off"><use href="#up"/></svg><i class="thumb t4"></i><svg class="tri"><use href="#down"/></svg></div>
          <div class="vsplit"></div>
          <p class="desc">Click a toolbar or tool<br>to see its description.</p>
        </div>
      </div>
    </div>
    <footer class="dlg-foot">
      <button aria-label="Settings"><svg class="gears" viewBox="0 0 32 26"><g fill="none" stroke="#484a4c"><circle cx="10" cy="16" r="5" stroke-width="4"/><circle cx="10" cy="16" r="8" stroke-width="3" stroke-dasharray="3 3.280"/><circle cx="25" cy="8" r="3" stroke-width="3"/><circle cx="25" cy="8" r="5" stroke-width="3" stroke-dasharray="2 1.930"/></g></svg></button>
      <span>Drag toolbar ← layout &nbsp;|&nbsp; Drag tool ← custom toolbar</span>
      <button aria-label="Gift"><svg class="gift" viewBox="0 0 42 42"><path d="M3 18h36v16l-18 7-18-7z" fill="#fed54f" stroke="#f6b24e"/><path d="M1 11l20-9 20 9v7l-20 8-20-8z" fill="#ffefa6" stroke="#f6b24e"/><path d="M10 14l22-7M10 7l22 7M12 16v21M30 16v21" stroke="#ef9430" stroke-width="4"/><path d="M21 11C13 9 8 6 10 1c4 0 9 4 11 8 2-4 7-8 11-8 2 5-3 8-11 10z" fill="#f09330"/><circle cx="21" cy="11" r="4" fill="#e8842c"/></svg></button>
    </footer>
  </section>
</main>
<footer class="status">
  <svg viewBox="0 0 24 24"><circle cx="12" cy="12" r="10" fill="none" stroke="#8d8f93" stroke-width="1.500"/><path d="M12 19c-1-6-4-6-4-10a4 4 0 018 0c0 4-3 4-4 10z" fill="#8d8f93"/><circle cx="12" cy="9" r="1.500" fill="#fff"/></svg>
  <svg viewBox="0 0 24 24"><circle cx="12" cy="12" r="10" fill="none" stroke="#8d8f93" stroke-width="1.500"/><circle cx="12" cy="6.500" r="1.500" fill="#8d8f93"/><path d="M9 9h6v5h-1v5h-4v-5H9z" fill="#8d8f93"/></svg>
  <span>Cliquez ou faites glisser pour sélectionner des objets. Maj = Ajouter/Soustraire. Ctrl = Ajouter. Maj + Ctrl = Soustraire.</span>
</footer>
</body>
</html>
```
FILE: styles.css
```css
* { box-sizing: border-box; }
html, body { height: 100%; }
body {
  margin: 0;
  display: flex;
  flex-direction: column;
  overflow: hidden;
  background: #f1f1f6;
  color: #2b2b2b;
  font: 18px "Open Sans", "Noto Sans", sans-serif;
}
button, input, select { font: inherit; color: inherit; border: 0; background: none; padding: 0; margin: 0; }
svg { flex: none; display: block; }
.defs { position: absolute; width: 0; height: 0; }
h2, p, ul { margin: 0; padding: 0; font-weight: 400; }

/* main window chrome */
.titlebar { height: 35px; display: flex; align-items: center; gap: 8px; padding-left: 2px; background: #f3f3f3; color: #8c8c8c; font-size: 17px; }
.logo { width: 24px; height: 24px; }
.winbtns { margin-left: auto; display: flex; gap: 54px; padding-right: 27px; }
.winbtns svg { width: 16px; height: 16px; fill: none; stroke: #000; stroke-width: 1.5; }
.main-btns { padding-right: 23px; }
.main-btns svg { stroke: #888; }
.menu { height: 31px; display: flex; align-items: center; gap: 21px; padding: 0 16px 2px; border-bottom: 1px solid #d6d6de; }
.menu a { color: inherit; text-decoration: none; }
.toolbars { height: 55px; display: flex; justify-content: space-between; padding: 1px 0 1px 6px; }
.tb { display: flex; align-items: center; border: 2px solid #e1e1ea; padding: 0 2px; }
.measures { width: 448px; color: #555; }
.measures label { flex: 1; }
.measures input { width: 240px; height: 32px; border: 1px solid #a4a4ac; border-bottom-width: 2px; border-radius: 3px; }
.grip { width: 8px; height: 26px; margin: 0 4px 0 0; background: radial-gradient(circle, #bbb 1px, transparent 1px) 0 0 / 4px 4px; }
.tags { width: 341px; border-right: 0; padding-right: 0; }
.combo { flex: 1; height: 33px; display: flex; align-items: center; gap: 8px; padding: 0 10px; background: #fff; border: 2px solid #a4a4ac; border-right: 0; border-radius: 4px 0 0 4px; }
.combo > svg:first-child { width: 18px; height: 16px; }
.combo select { flex: 1; appearance: none; }
.tri { width: 12px; height: 8px; fill: #505050; }
.tri.off { fill: #a0a0a0; }

/* modelling area */
.scene { flex: 1; min-height: 0; position: relative; background: linear-gradient(#dfe4e4, #f1f2f5 304px, #cccdc7 304px); }
.axes { position: absolute; width: 100%; height: 100%; }

.dialog {
  position: absolute;
  inset: 126px 348px 107px 416px;
  display: flex;
  flex-direction: column;
  overflow: hidden;
  border: 2px solid #b0b0b0;
  border-radius: 12px;
  background: #f1f1f1;
  font-family: Inter, "Open Sans", sans-serif;
  font-size: 18px;
}
.dlg-title { height: 43px; display: flex; align-items: center; gap: 9px; padding: 0 0 2px 11px; background: #eaf4f9; color: #000; font: 17px "Open Sans", sans-serif; }
.dlg-body { flex: 1; min-height: 0; display: flex; }
.left { width: 480px; display: flex; flex-direction: column; background: #e9e9e9; }
.head { height: 60px; flex: none; display: flex; align-items: center; justify-content: space-between; padding: 0 21px; color: #fff; }
.head h2 { font-size: 21px; }
.blue { background: #4464c4; }
.orange { background: #cd7744; }
.add { width: 42px; height: 42px; display: grid; place-items: center; border: 2px solid #ffffffc0; border-radius: 8px; background: #ffffff1c; }
.add svg { width: 24px; height: 24px; }
.saved { height: 443px; display: flex; overflow: hidden; }
.layouts { flex: 1; overflow: hidden; }
.layout { display: flex; padding: 12px 15px 12px 18px; border-bottom: 1px solid #d0d0d0; }
.dots { width: 10px; margin-right: 14px; background: radial-gradient(circle, #6c6c6c 2px, transparent 3px) 0 0 / 10px 9px; }
.card { width: 236px; height: 240px; display: flex; overflow: hidden; border-radius: 6px 0 0 6px; background: #69696b; color: #fff; }
.card.active { border-left: 5px solid #4464c4; }
.card-rows { flex: 1; min-width: 0; display: flex; flex-direction: column; gap: 9px; padding: 15px 15px 0; overflow: hidden; }
.active .card-rows { padding-left: 10px; }
.crow { display: flex; align-items: center; gap: 6px; height: 36px; flex: none; overflow: hidden; font-size: 17px; white-space: nowrap; }
.crow span { margin-right: 6px; flex: none; }
.crow .cut { width: 95px; }
.tool { width: 36px; height: 36px; border-radius: 4px; background: #727274; }
.bar { width: 25px; display: flex; flex-direction: column; align-items: center; padding: 9px 0; background: #f1f1f1; }
.bar .tri { flex: none; }
.thumb { width: 21px; background: #c1c1c1; margin: 8px 0 auto; }
.bar.dark { width: 17px; padding: 5px 0; background: #4a4a4c; }
.dark .tri { width: 8px; fill: #a0a0a2; }
.dark .thumb { width: 13px; margin-top: 4px; background: #9f9fa1; }
.t1 { height: 28px; }
.t2 { height: 56px; }
.t3 { height: 219px; }
.t4 { height: 59px; }
.meta { flex: 1; display: flex; flex-direction: column; align-items: flex-end; gap: 7px; color: #6b6b6b; font-size: 16px; }
.meta time { line-height: 24px; }
.acts { display: flex; align-items: center; gap: 12px; padding-right: 3px; }
.acts svg { width: 22px; height: 22px; fill: #000; }
.acts .arr { width: 14px; display: grid; place-items: center; }
.acts .arr svg { width: 10px; height: 9px; fill: #505050; }
.acts .arr:disabled svg { fill: #bdbdbd; }
.hsplit { height: 8px; flex: none; background: #b9b9b9; }
.vsplit { width: 8px; flex: none; background: #b9b9b9; }
.drop { padding-top: 28px; text-align: center; color: #777; font-size: 19px; line-height: 21px; font-style: italic; }

.right { flex: 1; min-width: 0; display: flex; flex-direction: column; }
.pills { display: flex; gap: 9px; padding: 12px 0 14px 15px; overflow: hidden; font-size: 17px; }
.pills button { flex: none; height: 41px; padding: 0 20px; border: 1px solid #d4d4d4; border-radius: 21px; background: #fff; color: #505050; font-weight: 500; }
.pills .on { background: #4464c4; border-color: #4464c4; color: #fff; font-weight: 600; }
.hbar { height: 16px; flex: none; display: flex; align-items: center; padding: 0 5px 2px; gap: 7px; border-bottom: 1px solid #dedede; }
.hbar svg { width: 5px; height: 10px; }
.hbar i { height: 13px; flex: 0 0 83%; margin-right: auto; background: #c1c1c1; }
.searchwrap { padding: 12px 13px 12px 15px; background: #f7f7f7; border-bottom: 1px solid #e0e0e0; }
.search { height: 44px; display: flex; align-items: center; gap: 11px; padding: 0 18px; background: #fff; border: 1px solid #c0c0c0; border-radius: 22px; }
.search svg { width: 18px; height: 18px; fill: none; stroke: #8a9ba3; stroke-width: 2; }
.search input { flex: 1; outline: 0; font-size: 19px; }
.search input::placeholder { color: #777; opacity: 1; }
.columns { flex: 1; min-height: 0; display: flex; }
.list { flex: 1; overflow: hidden; list-style: none; background: #fff; }
.list li { height: 55px; display: flex; align-items: center; gap: 6px; padding: 0 18px; border-bottom: 1px solid #ebebeb; }
.list button { flex: 1; display: flex; align-items: center; gap: 11px; text-align: left; color: #1c1c1c; }
.list button::before { content: ""; border: 6px solid transparent; border-left: 8px solid #444; border-right: 0; }
.list em { margin-right: 6px; color: #999; font-style: normal; font-size: 17px; }
.list svg { width: 36px; height: 36px; }
.desc { width: 272px; padding-top: 35px; background: #fafafa; color: #999; text-align: center; font-size: 17px; line-height: 25px; font-style: italic; }
.dlg-foot { height: 66px; display: flex; align-items: center; justify-content: space-between; padding: 2px 16px 0 26px; background: #c9c9c9; border-top: 1px solid #aeaeae; color: #4a4a4a; font-size: 17px; }
.gears { width: 32px; height: 26px; }
.gift { width: 42px; height: 42px; }

.status { height: 48px; flex: none; display: flex; align-items: center; gap: 18px; padding-left: 12px; color: #4a4a50; font-family: "Noto Sans", "Open Sans", sans-serif; font-size: 19px; }
.status svg { width: 24px; height: 24px; }
.status span { line-height: 34px; border-left: 2px solid #e1e1ea; padding-left: 9px; }

/* icon paint */
.b, .n, .s { fill: #dfeefa; stroke: #2a94d0; stroke-width: 1.5; stroke-linejoin: round; }
.n { stroke: #2f5f8a; }
.s { stroke: #4d86a8; stroke-width: 1; }
.bo { fill: none; stroke: #3a9fd6; stroke-width: 1.5; }
.w { stroke-width: 2; }
.r { fill: #ff4530; }
.rs { fill: none; stroke: #fa3030; stroke-width: 1.5; }
.nf { fill: #2f6088; }
.thick { stroke: #25a5de; stroke-width: 4; }
.tan { fill: none; stroke: #d4ac80; stroke-width: 1.5; }
.g { fill: #dcdcdc; stroke: #333; stroke-width: 1.3; }
.c { fill: #9c937c; stroke: #333; stroke-width: 1.3; }
.tag { font: bold 11px "Liberation Mono", monospace; fill: #3a6798; }
.soap { font: 17px "Liberation Sans", sans-serif; fill: #2020e8; stroke: #2020e8; stroke-width: 0.5; }
```
